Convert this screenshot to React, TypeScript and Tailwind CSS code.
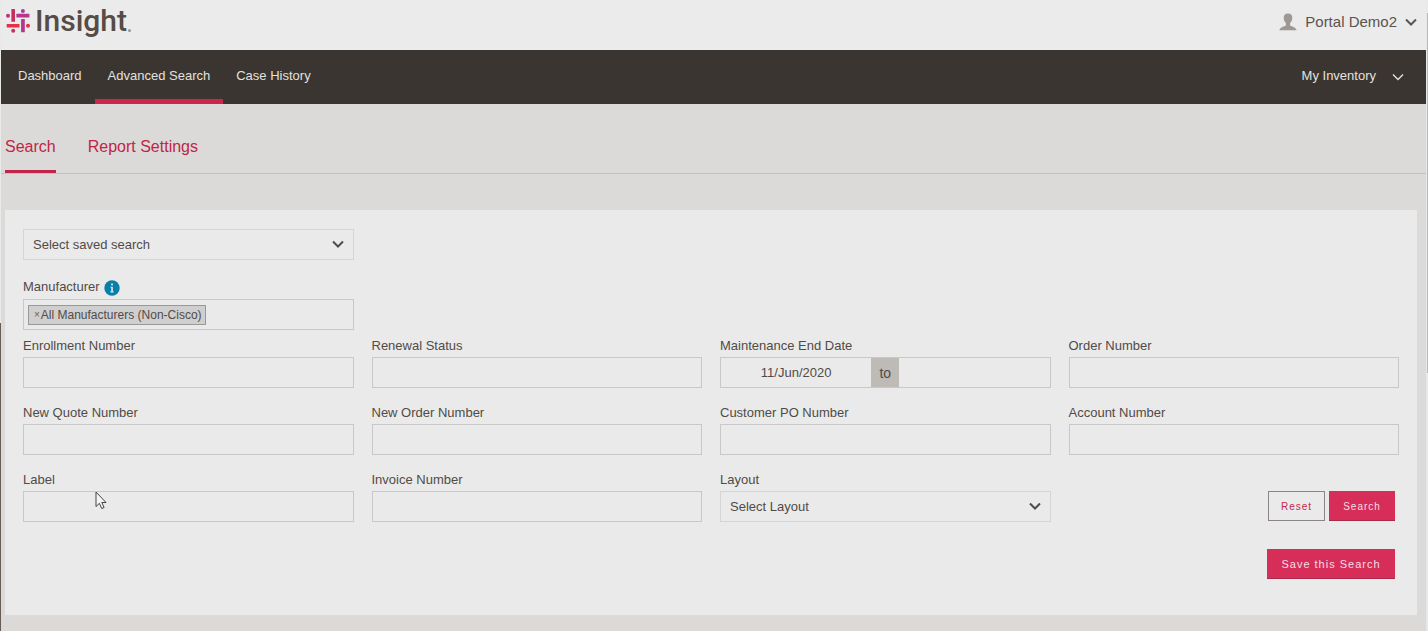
import React from 'react';

const navItems = [
  { label: 'Dashboard', active: false },
  { label: 'Advanced Search', active: true },
  { label: 'Case History', active: false },
];

function Chevron({ className, strokeWidth = 2 }: { className: string; strokeWidth?: number }) {
  return (
    <svg viewBox="0 0 12 8" fill="none" stroke="currentColor" strokeWidth={strokeWidth} className={className} aria-hidden="true">
      <path d="M1 1.5 6 6.5 11 1.5" />
    </svg>
  );
}

function LogoMark() {
  return (
    <svg viewBox="0 0 24 24" className="w-6 h-6" aria-hidden="true">
      <rect x="5.4" y="0" width="3.6" height="12.8" rx="0.5" fill="#c42f5c" />
      <rect x="10.4" y="4.8" width="13" height="3.6" rx="0.5" fill="#b8368a" />
      <rect x="0.7" y="15" width="12.8" height="3.6" rx="0.5" fill="#e23347" />
      <rect x="15.1" y="10" width="3.7" height="13.2" rx="0.5" fill="#b0388f" />
      <circle cx="2" cy="6.7" r="2" fill="#bf2f78" />
      <circle cx="16.9" cy="2" r="2" fill="#a83b93" />
      <circle cx="22" cy="16.8" r="2" fill="#e23347" />
      <circle cx="7.2" cy="21.8" r="2" fill="#cc3059" />
    </svg>
  );
}

function Field({ id, label, children }: { id: string; label: string; children?: React.ReactNode }) {
  return (
    <div className="min-w-0">
      <label htmlFor={id} className="block h-[23px] leading-6">{label}</label>
      <div className="relative">
        {children ?? <input id={id} type="text" className="block w-full h-[31px] px-2 border border-[#c8c8c8] outline-none" />}
      </div>
    </div>
  );
}

function SelectBox({ id, placeholder, label }: { id: string; placeholder: string; label?: string }) {
  return (
    <div className="relative">
      <select id={id} aria-label={label} className="block appearance-none w-full h-[31px] pl-[9px] pr-8 border border-[#d5d5d5] outline-none">
        <option>{placeholder}</option>
      </select>
      <Chevron className="absolute right-[10px] top-[11px] w-3 h-2 pointer-events-none" />
    </div>
  );
}

function Header() {
  return (
    <header className="flex items-center justify-between h-[50px] pl-[5px] pr-[9px] pb-2 bg-[#ebebeb]">
      <a href="#" className="flex items-center text-[#564b45]" aria-label="Insight">
        <LogoMark />
        <span className="ml-[5px] font-['Roboto',sans-serif] font-medium text-[30px] leading-[38px]">Insight</span>
        <span className="self-end mb-2 ml-px w-[3px] h-[3px] rounded-full bg-[#9c9692]" />
      </a>
      <button className="flex items-center pt-px text-[15px] leading-5 text-[#5b534e]">
        <svg viewBox="0 0 18 18" className="w-[18px] h-[18px] mr-2" fill="#9d9893" aria-hidden="true">
          <path d="M9 .5c-3 0-4.400 1.900-4.300 4.600.1 2.200.9 4 2.200 5v2.100C6.700 13.300.8 13.700.5 17.200h17c-.3-3.500-6.200-3.900-6.400-5v-2.100c1.300-1 2.100-2.800 2.200-5C13.400 2.400 12 .5 9 .5Z" />
        </svg>
        Portal Demo2
        <Chevron className="w-3 h-2 ml-2" />
      </button>
    </header>
  );
}

function NavBar() {
  return (
    <nav className="flex items-stretch justify-between h-[54px] pl-1 pr-[22px] bg-[#3a3531] text-[#e3e1df]">
      <div className="flex">
        {navItems.map((item) => (
          <a
            key={item.label}
            href="#"
            className={
              item.active
                ? 'px-[13px] pt-[3px] leading-[46px] border-b-5 border-[#ce254f]'
                : 'px-[13px] pt-[3px] leading-[46px]'
            }
          >
            {item.label}
          </a>
        ))}
      </div>
      <button className="flex items-center pb-[2px]">
        My Inventory
        <Chevron className="w-3 h-2 ml-4 mt-0.5" strokeWidth={1.4} />
      </button>
    </nav>
  );
}

function Tabs() {
  return (
    <div className="flex gap-8 h-[70px] pl-1 pt-7 border-b border-[#c3c2c0] text-base text-[#c02549]">
      <a href="#" className="leading-[30px] border-b-3 border-[#c02549]">Search</a>
      <a href="#" className="leading-[30px]">Report Settings</a>
    </div>
  );
}

function SearchForm() {
  return (
    <form className="ml-1 mr-[9px] mt-9 mb-4 h-[405px] px-[18px] pt-[19px] bg-[#eaeaea]" onSubmit={(e) => e.preventDefault()}>
      <div className="grid grid-cols-4 gap-x-[18px]">
        <div>
          <SelectBox id="saved" label="Saved search" placeholder="Select saved search" />
          <div className="flex items-center gap-1 mt-4 h-[23px]">
            <label htmlFor="manufacturer" className="leading-5 mb-0.5">Manufacturer</label>
            <svg viewBox="0 0 16 16" className="w-4 h-4" aria-hidden="true">
              <circle cx="8" cy="8" r="7.700" fill="#087fa9" />
              <path d="M7.200 3.500h1.700v1.700H7.200zM6.400 6.700h2.400v4.900h.9v.9H6.400v-.9h.9V7.600h-.9z" fill="#e8f1f4" />
            </svg>
          </div>
          <div className="flex items-center h-[31px] pl-1 border border-[#c8c8c8]">
            <span className="flex items-center h-5 pl-1 pr-[3px] text-xs bg-[#cfcfcf] border border-[#999] whitespace-nowrap">
              <button type="button" aria-label="Remove" className="px-px text-[10px] text-[#666]">×</button>
              All Manufacturers (Non-Cisco)
            </span>
            <input id="manufacturer" type="text" className="flex-1 min-w-0 h-5 px-1 outline-none" />
          </div>
        </div>
      </div>

      <div className="grid grid-cols-4 gap-x-[18px] gap-y-[13px] mt-1">
        <Field id="enrollment" label="Enrollment Number" />
        <Field id="renewal" label="Renewal Status" />
        <Field id="end-date" label="Maintenance End Date">
          <div className="flex h-[31px] border border-[#c8c8c8]">
            <input id="end-date" type="text" defaultValue="11/Jun/2020" className="flex-1 min-w-0 text-center outline-none" />
            <span className="flex items-center justify-center w-7 text-sm bg-[#bebab6]">to</span>
            <input type="text" aria-label="End date to" className="flex-1 min-w-0 text-center outline-none" />
          </div>
        </Field>
        <Field id="order" label="Order Number" />
        <Field id="new-quote" label="New Quote Number" />
        <Field id="new-order" label="New Order Number" />
        <Field id="customer-po" label="Customer PO Number" />
        <Field id="account" label="Account Number" />
        <Field id="label" label="Label">
          <input id="label" type="text" className="block w-full h-[31px] px-2 border border-[#c8c8c8] outline-none" />
          <svg viewBox="0 0 12 19" className="absolute left-[72px] top-0 w-3 h-[19px] pointer-events-none" aria-hidden="true">
            <path d="M1 1v14.500l3.400-3.200 2.300 5.200 2.400-1-2.300-5H11z" fill="#f4f4f4" stroke="#444" />
          </svg>
        </Field>
        <Field id="invoice" label="Invoice Number" />
        <Field id="layout" label="Layout">
          <SelectBox id="layout" placeholder="Select Layout" />
        </Field>
        <div className="flex justify-end items-end gap-1 pr-1 pb-px text-[10px] tracking-[1px]">
          <button type="reset" className="h-[30px] w-[57px] border border-[#8b8583] text-[#c4284e]">Reset</button>
          <button type="submit" className="h-[30px] w-[66px] bg-[#d62e59] border-y border-t-[#d62e59] border-b-[#a92a4b] text-[#f6dfe5]">Search</button>
        </div>
      </div>

      <div className="flex justify-end mt-[27px] pr-1">
        <button type="button" className="h-[30px] w-32 bg-[#d62e59] border-y border-t-[#d62e59] border-b-[#a92a4b] text-[11px] tracking-[1px] text-[#f6dfe5]">
          Save this Search
        </button>
      </div>
    </form>
  );
}

export default function App() {
  return (
    <div className="flex min-h-screen bg-[#dbdad8] font-['Liberation_Sans',Arial,sans-serif] text-[13px] text-[#514b47]">
      <div className="flex flex-col w-px shrink-0">
        <div className="h-[323px] bg-[#e9e9e8]" />
        <div className="flex-1 bg-[#675b56]" />
      </div>
      <main className="flex-1 min-w-0">
        <Header />
        <NavBar />
        <Tabs />
        <SearchForm />
      </main>
      <div className="flex flex-col w-0.5 shrink-0 bg-[#e8e8e8] pt-[13px] pl-px">
        <div className="h-[360px] bg-[#b9b9b9]" />
      </div>
    </div>
  );
}
